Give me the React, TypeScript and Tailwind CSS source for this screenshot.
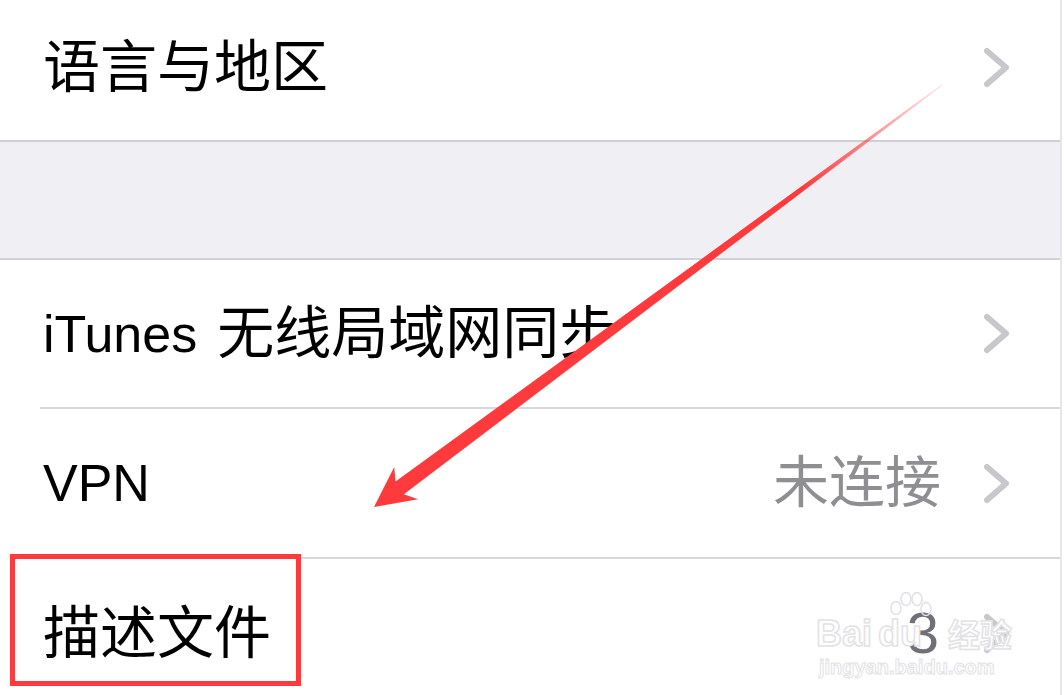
import { ReactNode } from "react";

const FONT = "font-['Liberation_Sans','Noto_Sans_CJK_SC',sans-serif]";

function Chevron() {
  return (
    <svg width="27" height="41" viewBox="0 0 27 41" className="shrink-0">
      <polyline
        points="4,4 23,20.5 4,37"
        fill="none"
        stroke="#c7c7cc"
        strokeWidth="6"
        strokeLinecap="round"
        strokeLinejoin="round"
      />
    </svg>
  );
}

function Row({
  children,
  detail,
  height,
  last,
}: {
  children: ReactNode;
  detail?: ReactNode;
  height: string;
  last?: boolean;
}) {
  return (
    <div className="pl-[40px]">
      <div
        className={`flex items-center justify-between pl-[3px] pr-[50px] ${height} ${
          last ? "" : "border-b-2 border-[#d8d8dc]"
        }`}
      >
        <div className="flex items-center text-black leading-none whitespace-nowrap">{children}</div>
        <div className="flex items-center">
          {detail}
          <Chevron />
        </div>
      </div>
    </div>
  );
}

// faint baidu jingyan watermark in the bottom right corner
function Watermark() {
  const outline = "text-white [-webkit-text-stroke:1.5px_#e2e2e5]";
  return (
    <div className="absolute left-[816px] top-[590px] w-[200px] h-[95px] pointer-events-none whitespace-nowrap">
      <svg width="44" height="36" viewBox="0 0 44 36" className="absolute left-[72px] top-[2px]">
        <g fill="none" stroke="#e0e0e3" strokeWidth="1.5">
          <ellipse cx="8" cy="16" rx="5" ry="6.5" />
          <ellipse cx="18" cy="7" rx="5" ry="6.5" />
          <ellipse cx="29" cy="7" rx="5" ry="6.5" />
          <ellipse cx="38" cy="17" rx="5" ry="6.5" />
        </g>
      </svg>
      <div className="absolute left-0 top-[26px] flex items-end leading-none">
        <span className={`text-[36px] font-bold ${outline}`}>Bai</span>
        <span className={`text-[36px] font-bold ml-[6px] ${outline}`}>du</span>
        <span className={`text-[32px] font-bold ml-[26px] ${outline}`}>经验</span>
      </div>
      <div
        className={`absolute left-[3px] top-[67px] text-[20px] font-bold leading-none ${outline} [-webkit-text-stroke:1px_#e2e2e5]`}
      >
        jingyan.baidu.com
      </div>
    </div>
  );
}

function Arrow() {
  // tip (374,507), tail (942,85)
  const pts =
    "374,507 394.2,467 395.5,481.6 941.6,84.4 942.4,85.6 403.9,494.2 418,499.2";
  return (
    <svg
      width="1064"
      height="695"
      viewBox="0 0 1064 695"
      className="absolute inset-0 pointer-events-none"
    >
      <defs>
        <linearGradient
          id="fade"
          gradientUnits="userSpaceOnUse"
          x1="945"
          y1="83"
          x2="800"
          y2="190"
        >
          <stop offset="0" stopColor="#fe3a3c" stopOpacity="0.1" />
          <stop offset="1" stopColor="#fe3a3c" stopOpacity="1" />
        </linearGradient>
      </defs>
      <polygon points={pts} fill="url(#fade)" />
    </svg>
  );
}

export default function App() {
  return (
    <div className={`relative w-[1064px] h-[695px] overflow-hidden bg-white ${FONT}`}>
      <div className="w-[1062px] h-full border-r-2 border-[#e6e6ea] bg-white">
        {/* 语言与地区 */}
        <div className="flex items-center justify-between h-[142px] pl-[43px] pr-[50px] pb-[6px] border-b-2 border-[#cfcfd3]">
          <span className="text-[57px] leading-none text-black">语言与地区</span>
          <Chevron />
        </div>

        {/* section gap */}
        <div className="h-[118px] bg-[#efeff4] border-b-2 border-[#d3d3d7]" />

        <Row height="h-[149px]">
          <span className="text-[52px]">iTunes</span>
          <span className="text-[57px] ml-[20px]">无线局域网同步</span>
        </Row>
        <Row
          height="h-[150px]"
          detail={
            <span className="text-[56px] leading-none text-[#8e8e93] mr-[42px]">未连接</span>
          }
        >
          <span className="text-[52px]">VPN</span>
        </Row>
        <Row
          height="h-[148px]"
          last
          detail={
            <span className="text-[58px] leading-none text-[#707076] mr-[44px]">3</span>
          }
        >
          <span className="text-[57px]">描述文件</span>
        </Row>
      </div>

      <Watermark />
      <Arrow />

      {/* highlight box */}
      <div className="absolute left-[10px] top-[554px] w-[291px] h-[132px] border-[5px] border-[#fe3a3c]" />
    </div>
  );
}
